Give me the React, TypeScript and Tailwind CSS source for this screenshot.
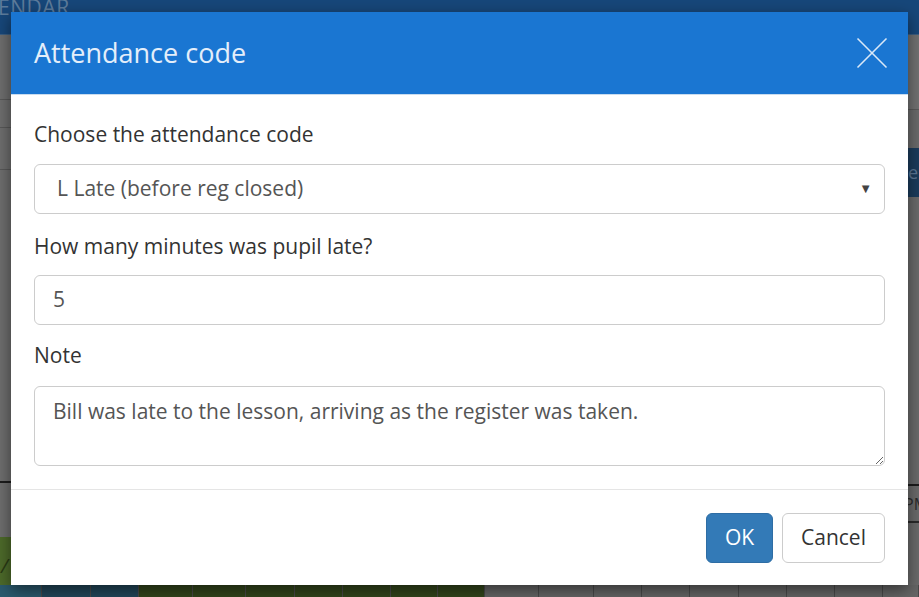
import React from "react";

const cells: { w: number; c: string }[] = [
  { w: 42, c: "bg-[#2b5a6e]" },
  { w: 49, c: "bg-[#22475a]" },
  { w: 48, c: "bg-[#22475a]" },
  { w: 54, c: "bg-[#33461c]" },
  { w: 53, c: "bg-[#33461c]" },
  { w: 49, c: "bg-[#33461c]" },
  { w: 48, c: "bg-[#33461c]" },
  { w: 48, c: "bg-[#33461c]" },
  { w: 47, c: "bg-[#33461c]" },
  { w: 47, c: "bg-[#33461c]" },
  { w: 54, c: "bg-[#666666]" },
  { w: 55, c: "bg-[#666666]" },
  { w: 48, c: "bg-[#666666]" },
  { w: 48, c: "bg-[#666666]" },
  { w: 49, c: "bg-[#666666]" },
  { w: 48, c: "bg-[#666666]" },
  { w: 48, c: "bg-[#666666]" },
  { w: 48, c: "bg-[#666666]" },
  { w: 36, c: "bg-[#666666]" },
];

export default function App() {
  return (
    <div
      className="relative w-[919px] h-[597px] overflow-hidden bg-[#6a6a6a]"
      style={{ fontFamily: "'Open Sans', 'Liberation Sans', sans-serif" }}
    >
      {/* Background page (dimmed) */}
      <div className="flex flex-col h-full">
        <div className="h-[35px] bg-[#17477a] border-b border-[#3d5f82] overflow-hidden">
          <div className="-mt-[8px] -ml-[41px] text-[21px] tracking-wide text-[#5d7c9c]">CALENDAR</div>
        </div>
        <div className="flex h-[550px]">
          {/* left strip */}
          <div className="w-[11px] flex flex-col">
            <div className="h-[65px] border-b border-[#585858] bg-[#6e6e6e]" />
            <div className="h-[28px] border-b border-[#585858] bg-[#6e6e6e]" />
            <div className="h-[42px] border-b border-[#585858] bg-[#6e6e6e]" />
            <div className="h-[313px] border-b-2 border-[#1c1c1c] bg-[#6e6e6e]" />
            <div className="h-[54px] bg-[#6e6e6e]" />
            <div className="flex-1 bg-[#4d6a2a] text-[#2a3a14] text-[20px] italic pl-[1px] pt-[14px]">/</div>
          </div>
          <div className="flex-1" />
          {/* right strip */}
          <div className="w-[11px] flex flex-col bg-[#6b6b6b]">
            <div className="h-[75px] border-b border-[#5a5a5a] bg-[#727272]" />
            <div className="h-[38px]" />
            <div className="h-[49px] bg-[#1b3c5c] overflow-hidden text-[#5d7896] text-[18px] leading-[49px]">er</div>
            <div className="h-[289px] border-b-2 border-[#1c1c1c]" />
            <div className="h-[37px] border-b-2 border-[#2a2a2a] overflow-hidden text-[#2b2b2b] text-[16px] leading-[37px] -ml-[4px]">PM</div>
            <div className="flex-1" />
          </div>
        </div>
        <div className="flex h-[12px]">
          {cells.map((cell, i) => (
            <div
              key={i}
              className={`${cell.c} border-r border-[#4a4a4a] shrink-0`}
              style={{ width: cell.w }}
            />
          ))}
        </div>
      </div>

      {/* Modal */}
      <div className="absolute left-[11px] top-[12px] w-[897px] bg-white shadow-[0_5px_15px_rgba(0,0,0,0.5)] flex flex-col">
        <div className="h-[83px] bg-[#1a76d2] border-b border-[#c9dcef] flex items-center justify-between px-[23px]">
          <div className="text-[27px] text-[#e4eefa] leading-none pb-[2px]">Attendance code</div>
          <svg width="32" height="32" viewBox="0 0 32 32" className="-mr-[3px]">
            <line x1="1.5" y1="1.5" x2="30.5" y2="30.5" stroke="#d9e8f8" strokeWidth="1.6" />
            <line x1="30.5" y1="1.5" x2="1.5" y2="30.5" stroke="#d9e8f8" strokeWidth="1.6" />
          </svg>
        </div>

        <div className="px-[23px] pt-[25px] pb-[23px] flex flex-col text-[21px] text-[#333333]">
          <div className="h-[28px] leading-[28px]">Choose the attendance code</div>
          <div className="mt-[16px] h-[50px] border border-[#cccccc] rounded-[6px] flex items-center justify-between pl-[22px] pr-[12px] text-[#555555]">
            <span>L Late (before reg closed)</span>
            <span className="text-[13px] text-[#444444]">▼</span>
          </div>

          <div className="mt-[18px] h-[28px] leading-[28px]">How many minutes was pupil late?</div>
          <div className="mt-[15px] h-[50px] border border-[#cccccc] rounded-[6px] flex items-center pl-[18px] text-[#555555]">
            5
          </div>

          <div className="mt-[16px] h-[28px] leading-[28px]">Note</div>
          <textarea
            className="mt-[17px] h-[80px] border border-[#cccccc] rounded-[6px] px-[18px] py-[10px] leading-[28px] text-[21px] text-[#555555] outline-none resize-y"
            style={{ fontFamily: "'Open Sans', 'Liberation Sans', sans-serif" }}
            defaultValue="Bill was late to the lesson, arriving as the register was taken."
          />
        </div>

        <div className="border-t border-[#e5e5e5] px-[23px] pt-[23px] pb-[22px] flex justify-end gap-[9px]">
          <button className="w-[67px] h-[50px] rounded-[6px] bg-[#337ab7] border border-[#2e6da4] text-white text-[21px]">
            OK
          </button>
          <button className="w-[103px] h-[50px] rounded-[6px] bg-white border border-[#cccccc] text-[#333333] text-[21px]">
            Cancel
          </button>
        </div>
      </div>
    </div>
  );
}
